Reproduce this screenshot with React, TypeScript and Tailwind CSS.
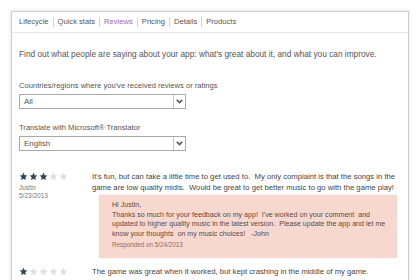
import React from 'react'

const tabs = ['Lifecycle', 'Quick stats', 'Reviews', 'Pricing', 'Details', 'Products']

const Star = ({ on }: { on: boolean }) => (
  <svg width="9" height="9" viewBox="0 0 24 24" className="mr-[1px]">
    <path
      d="M12 1.5l3.1 7 7.4.7-5.6 5 1.7 7.4L12 17.8l-6.6 3.8 1.7-7.4-5.6-5 7.4-.7z"
      fill={on ? '#2d4556' : '#dedede'}
    />
  </svg>
)

const Stars = ({ n }: { n: number }) => (
  <div className="flex items-center">
    {[0, 1, 2, 3, 4].map((i) => (
      <Star key={i} on={i < n} />
    ))}
  </div>
)

const Select = ({ value }: { value: string }) => (
  <div className="flex h-[15px] w-[167px] items-stretch border border-[#a8a8a8] bg-white">
    <div className="flex-1 pl-[4px] text-[8px] leading-[13px] text-[#555]">{value}</div>
    <div className="flex w-[12px] items-center justify-center border-l border-[#c4c4c4]">
      <svg width="7" height="5" viewBox="0 0 7 5">
        <path d="M0.8 0.8L3.5 3.6L6.2 0.8" fill="none" stroke="#555" strokeWidth="1.6" />
      </svg>
    </div>
  </div>
)

export default function App() {
  return (
    <div
      className="relative h-[280px] w-[420px] overflow-hidden bg-white pl-[11px] pr-[11px] pt-[11px]"
      style={{ fontFamily: '"Liberation Sans", Arial, sans-serif' }}
    >
      <div className="h-[300px] border border-[#cdcdcd] bg-white shadow-[0_0_4px_rgba(0,0,0,0.14)]">
        <div className="flex h-[21px] items-center border-b border-[#e6e6e6] pl-[7px] text-[7.6px] text-[#555]">
          {tabs.map((t, i) => (
            <div key={t} className="flex items-center">
              {i > 0 && <span className="mx-[4px] h-[10px] w-px bg-[#d4d4d4]" />}
              <span className={t === 'Reviews' ? 'text-[#a463b8]' : ''}>{t}</span>
            </div>
          ))}
        </div>

        <div className="pl-[7px] pr-[10px] text-[#555]">
          <p className="mt-[16px] text-[8.3px] leading-[10px]">
            Find out what people are saying about your app: what's great about it, and what you can improve.
          </p>

          <p className="mt-[22px] text-[7.6px] leading-[10px]">
            Countries/regions where you've received reviews or ratings
          </p>
          <div className="mt-[3px]">
            <Select value="All" />
          </div>

          <p className="mt-[14px] text-[7.6px] leading-[10px]">Translate with Microsoft® Translator</p>
          <div className="mt-[3px]">
            <Select value="English" />
          </div>

          <div className="mt-[20px] flex">
            <div className="w-[73px] shrink-0 pt-[1px]">
              <Stars n={3} />
              <div className="mt-[3px] text-[6.5px] leading-[8px] text-[#777]">Justin</div>
              <div className="text-[6.5px] leading-[8px] text-[#777]">5/23/2013</div>
            </div>
            <div className="min-w-0 flex-1">
              <p className="whitespace-nowrap text-[7.7px] leading-[11px] text-[#444]">
                It's fun, but can take a little time to get used to.&nbsp; My only complaint is that the songs in the
                <br />
                game are low quality midis.&nbsp; Would be great to get better music to go with the game play!
              </p>
              <div className="ml-[7px] mr-[1px] mt-[2px] h-[63px] overflow-hidden whitespace-nowrap bg-[#f7d8ce] pl-[13px] pt-[6px] text-[7.1px] leading-[9.6px] text-[#5e4a46] shadow-[0_0_2px_rgba(0,0,0,0.1)]">
                <div>Hi Justin,</div>
                <div>
                  Thanks so much for your feedback on my app!&nbsp; I've worked on your comment&nbsp; and
                  <br />
                  updated to higher quality music in the latest version.&nbsp; Please update the app and let me
                  <br />
                  know your thoughts&nbsp; on my music choices!&nbsp;&nbsp; -John
                </div>
                <div className="mt-[1px] text-[6.3px] text-[#9a6a5c]">Responded on 5/24/2013</div>
              </div>
            </div>
          </div>

          <div className="mt-[8px] flex">
            <div className="w-[73px] shrink-0 pt-[1px]">
              <Stars n={1} />
            </div>
            <p className="text-[7.7px] leading-[11px] text-[#444]">
              The game was great when it worked, but kept crashing in the middle of my game.
            </p>
          </div>
        </div>
      </div>
    </div>
  )
}
